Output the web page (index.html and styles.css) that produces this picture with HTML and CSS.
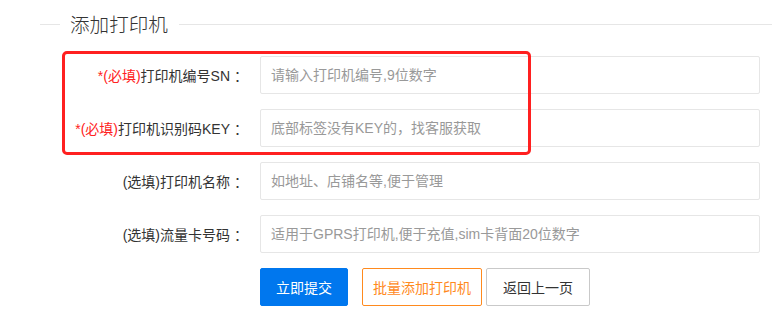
FILE: index.html
```html
<!DOCTYPE html>
<html lang="zh">
<head>
<meta charset="utf-8">
<link rel="stylesheet" href="styles.css">
</head>
<body>
<div class="page">
  <div class="legend">
    <span class="line short"></span>
    <span class="title">添加打印机</span>
    <span class="line long"></span>
  </div>
  <form class="form">
    <div class="row">
      <label class="label"><span class="req">*(必填)</span>打印机编号SN<span class="colon">：</span></label>
      <input class="input" type="text" placeholder="请输入打印机编号,9位数字">
    </div>
    <div class="row">
      <label class="label"><span class="req">*(必填)</span>打印机识别码KEY<span class="colon">：</span></label>
      <input class="input" type="text" placeholder="底部标签没有KEY的，找客服获取">
    </div>
    <div class="row">
      <label class="label">(选填)打印机名称<span class="colon">：</span></label>
      <input class="input" type="text" placeholder="如地址、店铺名等,便于管理">
    </div>
    <div class="row">
      <label class="label">(选填)流量卡号码<span class="colon">：</span></label>
      <input class="input" type="text" placeholder="适用于GPRS打印机,便于充值,sim卡背面20位数字">
    </div>
    <div class="actions">
      <button type="button" class="btn primary">立即提交</button>
      <button type="button" class="btn warn">批量添加打印机</button>
      <button type="button" class="btn plain">返回上一页</button>
    </div>
  </form>
  <div class="highlight"></div>
</div>
</body>
</html>
```
FILE: styles.css
```css
* { box-sizing: border-box; }
html, body { margin: 0; padding: 0; background: #fff; }
body {
  font-family: "Liberation Sans", "Noto Sans CJK SC", sans-serif;
  color: #333;
  font-size: 14px;
}
.page {
  position: relative;
  width: 772px;
  height: 326px;
  overflow: hidden;
}
.legend {
  display: flex;
  align-items: center;
  padding-left: 40px;
  height: 46px;
  margin-top: 1px;
}
.line { height: 1px; background: #e6e6e6; }
.line.short { width: 20px; }
.line.long { flex: 1; }
.title {
  font-family: "Noto Sans CJK SC", sans-serif;
  font-weight: 300;
  font-size: 19.6px;
  color: #333;
  padding: 0 11px 0 10px;
  line-height: 24px;
}
.form {
  margin-top: 9px;
  display: flex;
  flex-direction: column;
  gap: 15px;
}
.row {
  display: flex;
  align-items: center;
}
.label {
  width: 260px;
  padding-right: 12px;
  text-align: right;
  font-size: 14px;
  color: #333;
  font-family: "Liberation Sans", "Noto Sans CJK SC", sans-serif;
  white-space: nowrap;
}
.colon { margin-left: 4px; }
.req { color: #ff2222; }
.input {
  width: 500px;
  height: 38px;
  border: 1px solid #e6e6e6;
  border-radius: 2px;
  padding: 0 10px;
  font-size: 14px;
  font-family: "Liberation Sans", "Noto Sans CJK SC", sans-serif;
  color: #333;
  outline: none;
}
.input::placeholder { color: #999; }
.actions {
  display: flex;
  padding-left: 260px;
}
.btn {
  height: 38px;
  font-size: 14px;
  font-family: "Noto Sans CJK SC", sans-serif;
  border-radius: 2px;
  padding: 0;
  white-space: nowrap;
  cursor: pointer;
  background: #fff;
}
.btn.primary {
  background: #0077ee;
  border: 1px solid #0077ee;
  color: #fff;
  width: 88px;
  margin-right: 14px;
}
.btn.warn {
  border: 1px solid #ff8a1e;
  color: #ff8a1e;
  width: 120px;
  margin-right: 4px;
}
.btn.plain {
  border: 1px solid #c9c9c9;
  color: #333;
  width: 104px;
}
.highlight {
  position: absolute;
  left: 62px;
  top: 51px;
  width: 469px;
  height: 104px;
  border: 3px solid #ff2020;
  border-radius: 5px;
  pointer-events: none;
}
```
